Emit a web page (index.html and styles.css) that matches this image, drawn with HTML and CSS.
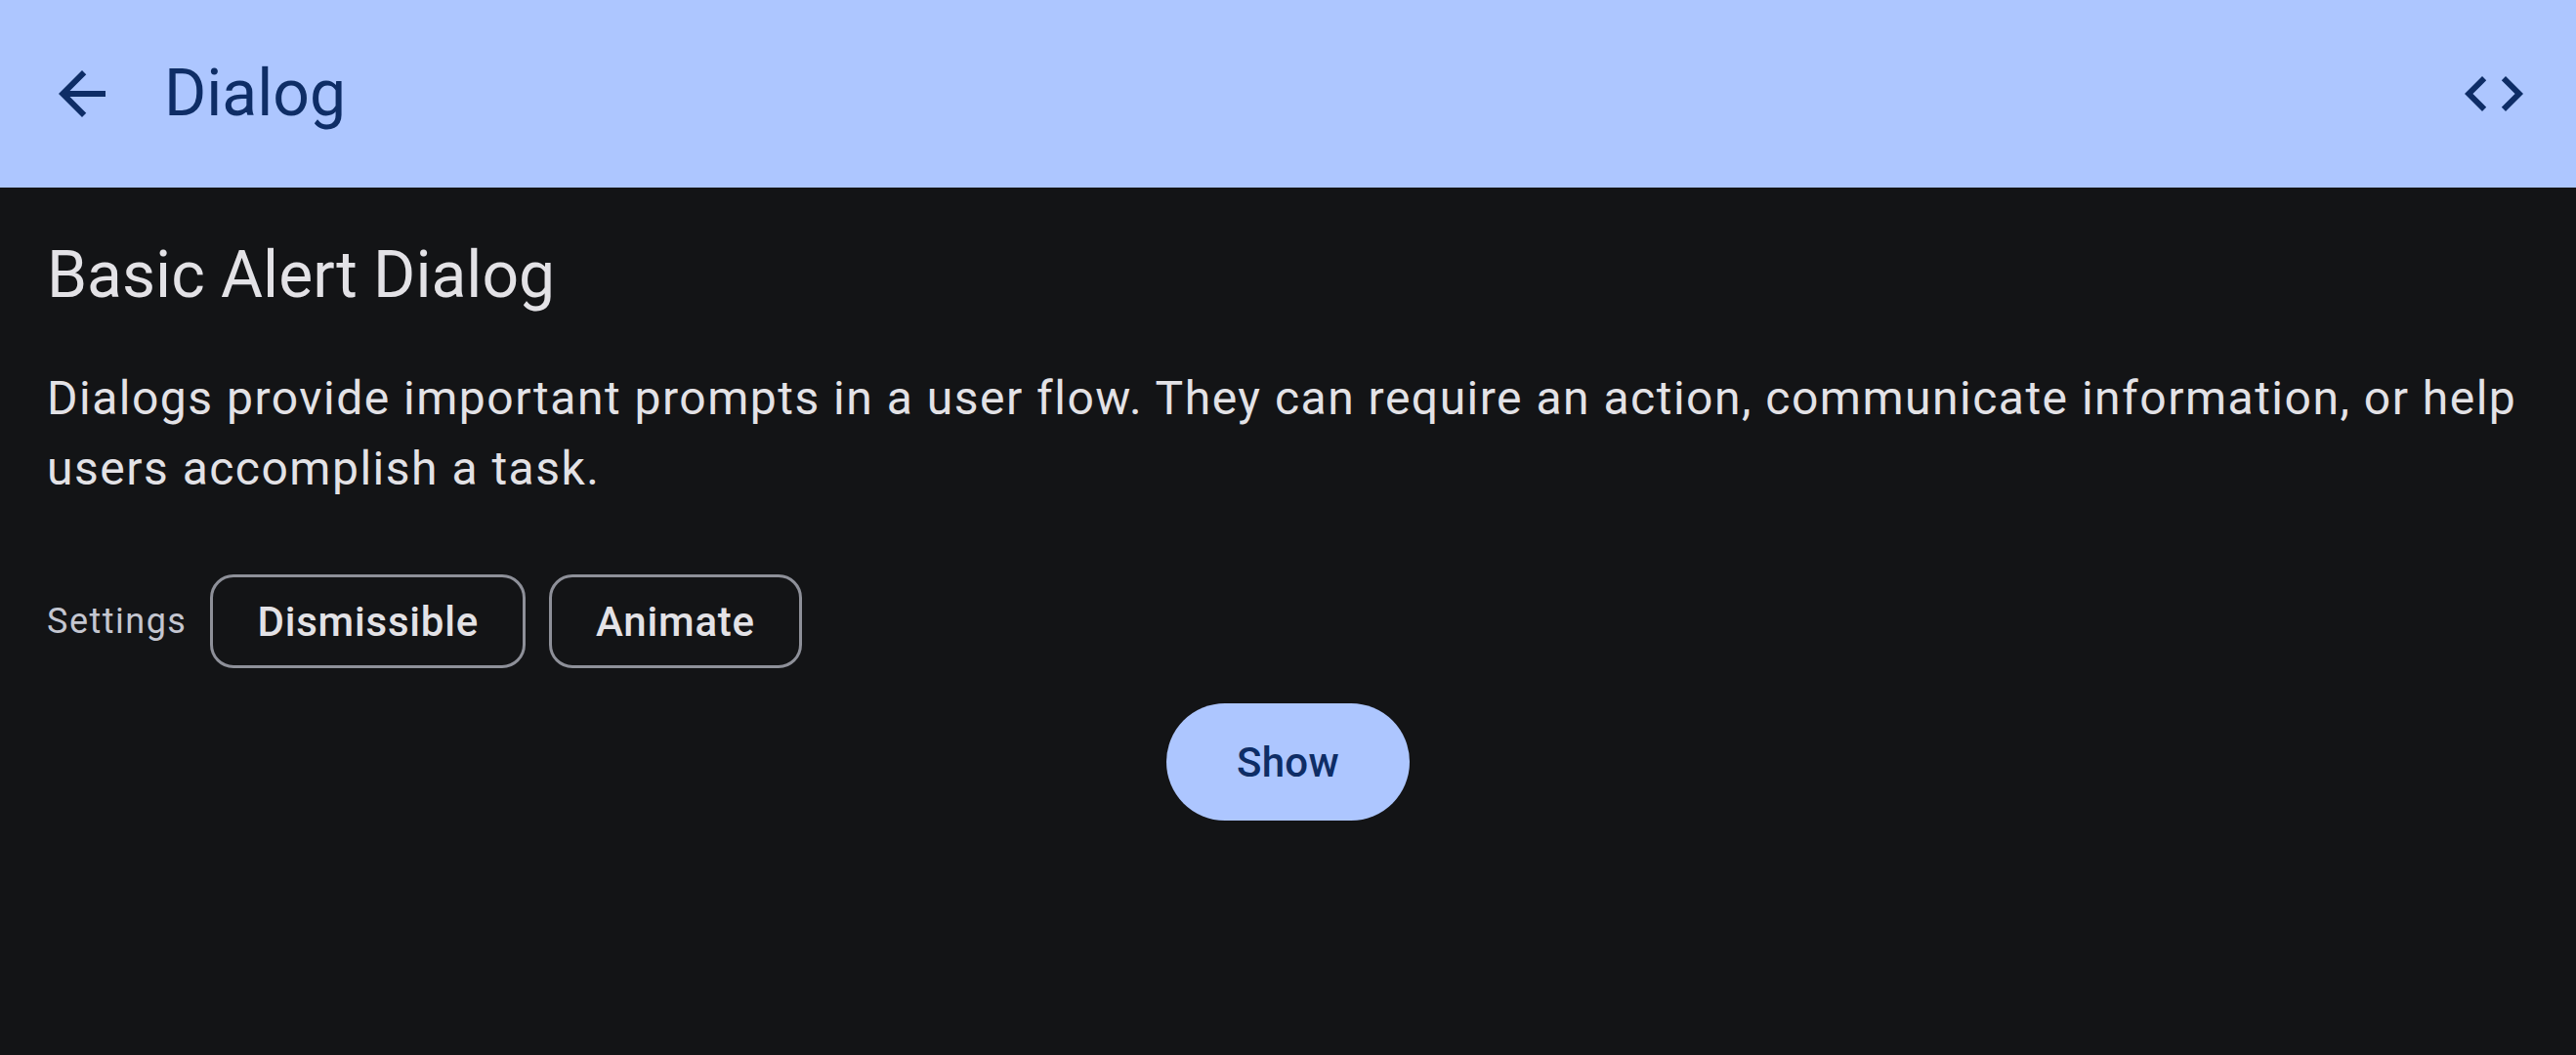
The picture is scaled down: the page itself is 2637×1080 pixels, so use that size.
FILE: index.html
```html
<!DOCTYPE html>
<html lang="en">
<head>
<meta charset="utf-8">
<title>Dialog</title>
<link rel="stylesheet" href="styles.css">
</head>
<body>
<header class="topbar">
  <button class="icon-btn" aria-label="Back">
    <svg class="icon" viewBox="0 0 24 24" width="72" height="72"><path d="M20 11H7.83l5.59-5.59L12 4l-8 8 8 8 1.41-1.41L7.83 13H20v-2z"/></svg>
  </button>
  <h1 class="topbar-title">Dialog</h1>
  <button class="icon-btn" aria-label="Source code">
    <svg class="icon" viewBox="0 0 24 24" width="72" height="72"><path d="M9.4 16.6L4.8 12l4.6-4.6L8 6l-6 6 6 6 1.4-1.4zm5.2 0l4.6-4.6-4.6-4.6L16 6l6 6-6 6-1.4-1.4z"/></svg>
  </button>
</header>
<main class="content">
  <h2 class="title">Basic Alert Dialog</h2>
  <p class="desc">Dialogs provide important prompts in a user flow. They can require an action, communicate information, or help users accomplish a task.</p>
  <div class="settings">
    <span class="settings-label">Settings</span>
    <button class="chip">Dismissible</button>
    <button class="chip">Animate</button>
  </div>
  <div class="show-wrap">
    <button class="show">Show</button>
  </div>
</main>
</body>
</html>
```
FILE: styles.css
```css
html, body {
  margin: 0;
  padding: 0;
  background: #131416;
  font-family: Roboto, "Liberation Sans", sans-serif;
}

.topbar {
  height: 192px;
  display: flex;
  align-items: center;
  padding: 0 12px;
  background: #adc6ff;
  color: #0e2d66;
}

.icon-btn {
  width: 144px;
  height: 144px;
  display: flex;
  align-items: center;
  justify-content: center;
  padding: 0;
  border: 0;
  background: none;
  flex: none;
}

.icon {
  fill: #0e2d66;
  display: block;
}

.topbar-title {
  flex: 1;
  margin: 0 0 0 12px;
  font-size: 66px;
  line-height: 84px;
  font-weight: 400;
}

.content {
  padding: 0 48px;
  color: #e3e2e6;
}

.title {
  margin: 48px 0 0;
  font-size: 66px;
  line-height: 84px;
  font-weight: 400;
}

.desc {
  margin: 48px 0 0;
  font-size: 48px;
  line-height: 72px;
  letter-spacing: 1.5px;
}

.settings {
  margin-top: 48px;
  height: 144px;
  display: flex;
  align-items: center;
  gap: 24px;
}

.settings-label {
  font-size: 36px;
  line-height: 48px;
  letter-spacing: 1.5px;
  color: #c4c6d0;
}

.chip {
  box-sizing: border-box;
  height: 96px;
  padding: 0 45px;
  border: 3px solid #8e9099;
  border-radius: 24px;
  background: transparent;
  color: #e3e2e6;
  font-family: Roboto, "Liberation Sans", sans-serif;
  font-size: 42px;
  font-weight: 500;
  letter-spacing: 0.8px;
}

.show-wrap {
  display: flex;
  justify-content: center;
  padding-top: 12px;
}

.show {
  height: 120px;
  padding: 0 72px;
  border: 0;
  border-radius: 60px;
  background: #adc6ff;
  color: #0e2d66;
  font-family: Roboto, "Liberation Sans", sans-serif;
  font-size: 42px;
  font-weight: 500;
  letter-spacing: 0.3px;
}
```
